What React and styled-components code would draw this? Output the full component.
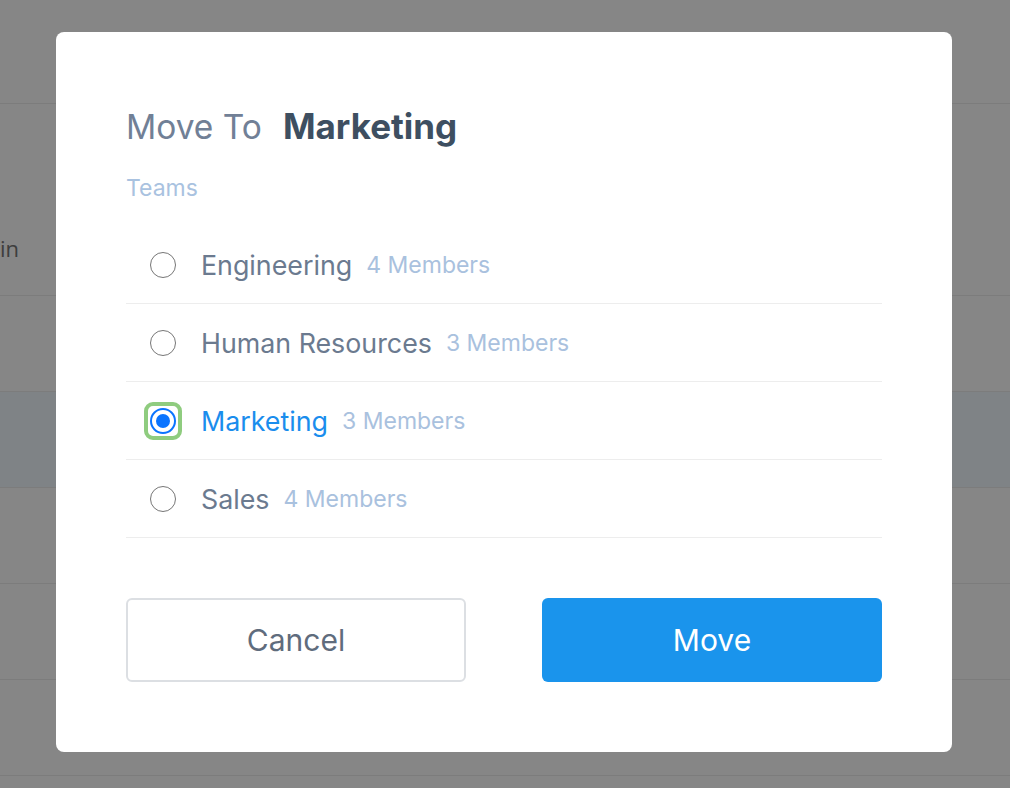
import styled, { createGlobalStyle } from 'styled-components';

const GlobalStyle = createGlobalStyle`
  html, body {
    margin: 0;
    padding: 0;
    background: #ffffff;
    font-family: Inter, "Noto Sans", "Liberation Sans", sans-serif;
  }
  * {
    box-sizing: border-box;
  }
`;

// 뒤에 깔린 표
const Page = styled.div`
  width: 1010px;
  height: 788px;
  overflow: hidden;
`;

const TableRow = styled.div`
  height: ${(p) => p.$height || 96}px;
  display: flex;
  align-items: center;
  background: ${(p) => (p.$active ? '#f2f9ff' : '#ffffff')};
  border-bottom: ${(p) => (p.$line ? '1px solid #ececec' : 'none')};
`;

const Cell = styled.div`
  font-family: "Open Sans", sans-serif;
  font-size: 22px;
  color: #777777;
  white-space: nowrap;
`;

// 모달
const Overlay = styled.div`
  position: fixed;
  inset: 0;
  background: rgba(0, 0, 0, 0.475);
  display: flex;
  align-items: flex-start;
  padding: 32px 56px;
`;

const Modal = styled.div`
  width: 896px;
  height: 720px;
  background: #ffffff;
  border-radius: 8px;
  padding: 74px 70px 70px;
  display: flex;
  flex-direction: column;
`;

const Title = styled.h2`
  margin: 0;
  display: flex;
  align-items: baseline;
  gap: 21px;
  font-size: 33.5px;
  line-height: 40px;
  font-weight: 400;
  color: #718096;
  strong {
    font-size: 35px;
    font-weight: 700;
    color: #3e4f61;
  }
`;

const Caption = styled.div`
  margin-top: 28px;
  font-size: 23px;
  line-height: 26px;
  color: #a9c2e0;
`;

const List = styled.div`
  margin-top: 25px;
  display: flex;
  flex-direction: column;
`;

const Row = styled.label`
  height: 78px;
  display: flex;
  align-items: center;
  padding-left: 18px;
  border-bottom: 1px solid #ededed;
  cursor: pointer;
`;

const Focus = styled.span`
  display: flex;
  padding: 2px;
  border: 4px solid ${(p) => (p.$on ? '#8fcc7f' : 'transparent')};
  border-radius: 9px;
`;

const Radio = styled.span`
  width: 26px;
  height: 26px;
  border-radius: 50%;
  border: ${(p) => (p.$on ? '2px solid #0a74ff' : '1.5px solid #767676')};
  display: flex;
  align-items: center;
  justify-content: center;
  &::after {
    content: '';
    display: ${(p) => (p.$on ? 'block' : 'none')};
    width: 14px;
    height: 14px;
    border-radius: 50%;
    background: #0a74ff;
  }
`;

const Name = styled.span`
  margin-left: 19px;
  font-size: 26.8px;
  color: ${(p) => (p.$on ? '#1a8ded' : '#6b7a8f')};
`;

const Count = styled.span`
  margin-left: 14px;
  font-size: 23px;
  color: #a9c1de;
`;

const Actions = styled.div`
  margin-top: auto;
  display: flex;
  justify-content: space-between;
`;

const Button = styled.button`
  width: 340px;
  height: 84px;
  border-radius: 6px;
  font-family: inherit;
  font-size: 30px;
  cursor: pointer;
  border: ${(p) => (p.$primary ? 'none' : '2px solid #dcdfe3')};
  background: ${(p) => (p.$primary ? '#1a94ec' : '#ffffff')};
  color: ${(p) => (p.$primary ? '#ffffff' : '#5f6c7d')};
`;

const teams = [
  { name: 'Engineering', members: 4 },
  { name: 'Human Resources', members: 3 },
  { name: 'Marketing', members: 3 },
  { name: 'Sales', members: 4 },
];

const App = () => {
  const selected = 'Marketing';
  return (
    <>
      <GlobalStyle />
      <Page>
        <TableRow $height={104} $line />
        <TableRow />
        <TableRow $line>
          <Cell>in</Cell>
        </TableRow>
        <TableRow $line />
        <TableRow $line $active />
        <TableRow $line />
        <TableRow $line />
        <TableRow $line />
      </Page>
      <Overlay>
        <Modal>
          <Title>
            Move To <strong>{selected}</strong>
          </Title>
          <Caption>Teams</Caption>
          <List>
            {teams.map((t) => {
              const on = t.name === selected;
              return (
                <Row key={t.name}>
                  <Focus $on={on}>
                    <Radio $on={on} />
                  </Focus>
                  <Name $on={on}>{t.name}</Name>
                  <Count>{t.members} Members</Count>
                </Row>
              );
            })}
          </List>
          <Actions>
            <Button>Cancel</Button>
            <Button $primary>Move</Button>
          </Actions>
        </Modal>
      </Overlay>
    </>
  );
};

export default App;
